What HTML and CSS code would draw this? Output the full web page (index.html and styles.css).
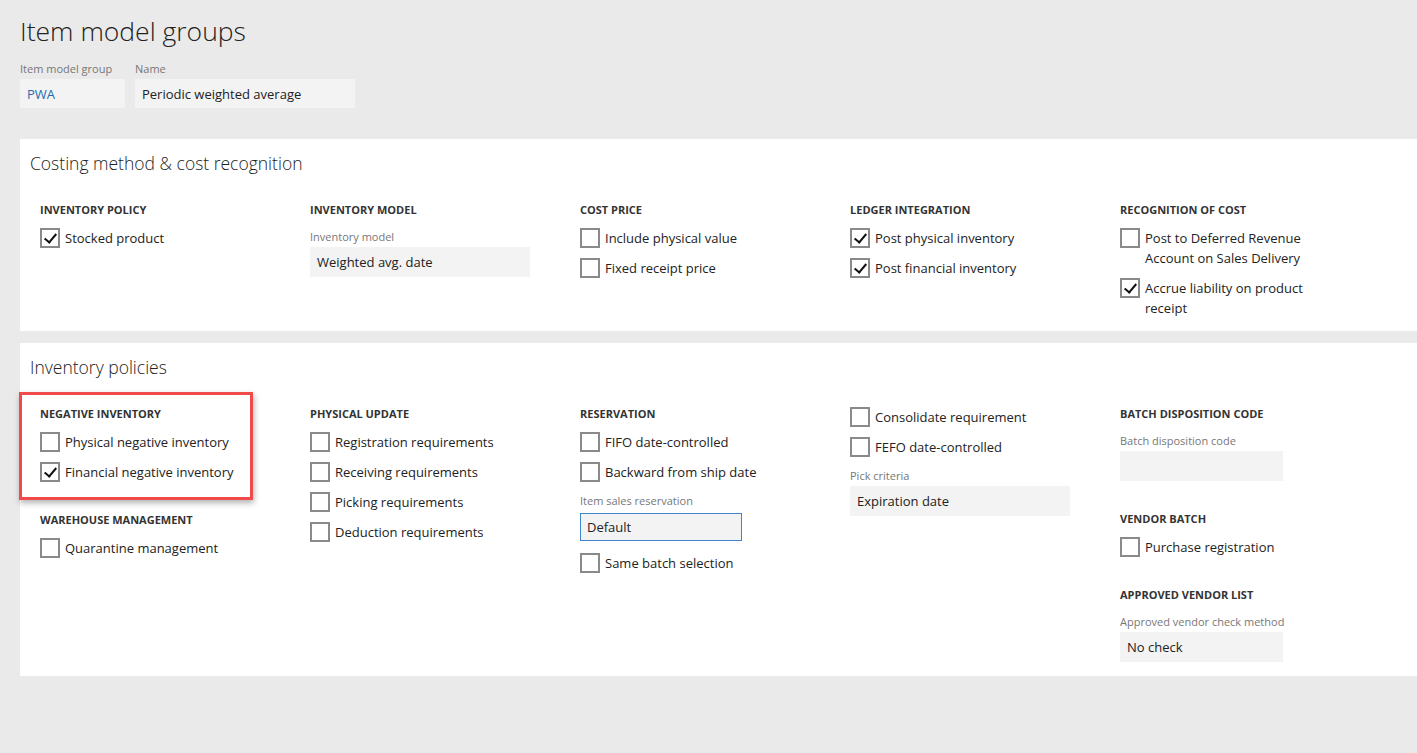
FILE: index.html
```html
<!DOCTYPE html>
<html lang="en">
<head>
    <meta charset="UTF-8">
    <title>Item model groups</title>
    <link rel="stylesheet" href="styles.css">
</head>
<body>
    <div class="page">
        <h1 class="page-title">Item model groups</h1>

        <div class="header-fields">
            <div class="field">
                <div class="field-label">Item model group</div>
                <div class="input input-id">PWA</div>
            </div>
            <div class="field">
                <div class="field-label">Name</div>
                <div class="input input-name">Periodic weighted average</div>
            </div>
        </div>

        <!-- Costing method -->
        <section class="card">
            <h2 class="card-title">Costing method &amp; cost recognition</h2>
            <div class="columns">
                <div class="col">
                    <div class="group">
                        <div class="group-title">Inventory policy</div>
                        <label class="check"><span class="box checked"></span><span>Stocked product</span></label>
                    </div>
                </div>
                <div class="col">
                    <div class="group">
                        <div class="group-title">Inventory model</div>
                        <div class="field-label">Inventory model</div>
                        <div class="input">Weighted avg. date</div>
                    </div>
                </div>
                <div class="col">
                    <div class="group">
                        <div class="group-title">Cost price</div>
                        <label class="check"><span class="box"></span><span>Include physical value</span></label>
                        <label class="check"><span class="box"></span><span>Fixed receipt price</span></label>
                    </div>
                </div>
                <div class="col">
                    <div class="group">
                        <div class="group-title">Ledger integration</div>
                        <label class="check"><span class="box checked"></span><span>Post physical inventory</span></label>
                        <label class="check"><span class="box checked"></span><span>Post financial inventory</span></label>
                    </div>
                </div>
                <div class="col">
                    <div class="group">
                        <div class="group-title">Recognition of cost</div>
                        <label class="check wrap"><span class="box"></span><span>Post to Deferred Revenue Account on Sales Delivery</span></label>
                        <label class="check wrap"><span class="box checked"></span><span>Accrue liability on product receipt</span></label>
                    </div>
                </div>
            </div>
        </section>

        <!-- Inventory policies -->
        <section class="card card-tall">
            <h2 class="card-title">Inventory policies</h2>
            <div class="columns">
                <div class="col">
                    <div class="group highlighted">
                        <div class="group-title">Negative inventory</div>
                        <label class="check"><span class="box"></span><span>Physical negative inventory</span></label>
                        <label class="check"><span class="box checked"></span><span>Financial negative inventory</span></label>
                    </div>
                    <div class="group">
                        <div class="group-title">Warehouse management</div>
                        <label class="check"><span class="box"></span><span>Quarantine management</span></label>
                    </div>
                </div>
                <div class="col">
                    <div class="group">
                        <div class="group-title">Physical update</div>
                        <label class="check"><span class="box"></span><span>Registration requirements</span></label>
                        <label class="check"><span class="box"></span><span>Receiving requirements</span></label>
                        <label class="check"><span class="box"></span><span>Picking requirements</span></label>
                        <label class="check"><span class="box"></span><span>Deduction requirements</span></label>
                    </div>
                </div>
                <div class="col">
                    <div class="group">
                        <div class="group-title">Reservation</div>
                        <label class="check"><span class="box"></span><span>FIFO date-controlled</span></label>
                        <label class="check"><span class="box"></span><span>Backward from ship date</span></label>
                        <div class="field-label">Item sales reservation</div>
                        <div class="input input-short focused">Default</div>
                        <label class="check after-input"><span class="box"></span><span>Same batch selection</span></label>
                    </div>
                </div>
                <div class="col">
                    <div class="group no-title">
                        <label class="check"><span class="box"></span><span>Consolidate requirement</span></label>
                        <label class="check"><span class="box"></span><span>FEFO date-controlled</span></label>
                        <div class="field-label">Pick criteria</div>
                        <div class="input">Expiration date</div>
                    </div>
                </div>
                <div class="col">
                    <div class="group gap-lg">
                        <div class="group-title">Batch disposition code</div>
                        <div class="field-label">Batch disposition code</div>
                        <div class="input input-short"></div>
                    </div>
                    <div class="group">
                        <div class="group-title">Vendor batch</div>
                        <label class="check"><span class="box"></span><span>Purchase registration</span></label>
                    </div>
                    <div class="group">
                        <div class="group-title">Approved vendor list</div>
                        <div class="field-label">Approved vendor check method</div>
                        <div class="input input-short">No check</div>
                    </div>
                </div>
            </div>
        </section>
    </div>
</body>
</html>
```

FILE: styles.css
```css
* {
    box-sizing: border-box;
}

body {
    margin: 0;
    background: #eaeaea;
    font-family: "Open Sans", "Noto Sans", sans-serif;
    font-size: 13px;
    color: #222;
}

.page {
    padding: 13px 0 0 20px;
}

.page-title {
    margin: 0;
    font-size: 26.5px;
    font-weight: 300;
    line-height: 36px;
    color: #222;
}

.header-fields {
    display: flex;
    gap: 10px;
    margin-top: 12px;
}

.field-label {
    font-size: 11px;
    line-height: 16px;
    color: #777;
    margin-bottom: 2px;
}

.input {
    width: 220px;
    height: 30px;
    line-height: 31px;
    padding: 0 7px;
    background: #f3f3f3;
    font-size: 13px;
    color: #222;
    white-space: nowrap;
}

.header-fields .input {
    height: 29px;
    line-height: 31px;
}

.input-id {
    width: 105px;
    color: #1f6bb5;
}

.input-short {
    width: 163px;
}

.input.focused {
    width: 162px;
    height: 28px;
    line-height: 27px;
    margin-top: 4px;
    padding: 0 6px;
    border: 1px solid #3f86c8;
}

.card {
    background: #fff;
    margin-top: 31px;
    padding: 12px 0 8px 10px;
}

.card + .card {
    margin-top: 12px;
}

.card-tall {
    padding-bottom: 14px;
}

.card-title {
    margin: 0;
    font-size: 17.5px;
    font-weight: 300;
    line-height: 24px;
    color: #222;
}

.columns {
    display: grid;
    grid-template-columns: repeat(5, 270px);
    margin-top: 25px;
    padding-left: 10px;
}

.group {
    position: relative;
}

.group + .group {
    margin-top: 23px;
}

.group.gap-lg + .group {
    margin-top: 28px;
}

.group.no-title {
    margin-top: -2px;
}

.group-title {
    font-size: 11px;
    font-weight: 700;
    line-height: 20px;
    text-transform: uppercase;
    color: #333;
    margin-bottom: 3px;
}

.group-title + .field-label,
.check + .field-label {
    padding-top: 6px;
}

.check {
    display: flex;
    align-items: flex-start;
    gap: 5px;
    padding: 5px 0;
    line-height: 20px;
    font-size: 13px;
    color: #222;
}

.check.wrap span:last-child {
    width: 170px;
}

.check.after-input {
    margin-top: 7px;
}

.box {
    flex: none;
    width: 20px;
    height: 20px;
    border: 2px solid #8a8a8a;
    background: #fff;
    position: relative;
}

.box.checked::after {
    content: "";
    position: absolute;
    left: 5px;
    top: 1px;
    width: 5px;
    height: 10px;
    border: solid #111;
    border-width: 0 2.5px 2.5px 0;
    transform: rotate(40deg);
}

/* red highlight round the negative inventory block */
.highlighted::after {
    content: "";
    position: absolute;
    top: -12px;
    left: -21px;
    right: 57px;
    bottom: -13px;
    border: 3px solid #f04a4a;
    box-shadow: 1px 3px 6px rgba(0, 0, 0, 0.3);
    pointer-events: none;
}
```
